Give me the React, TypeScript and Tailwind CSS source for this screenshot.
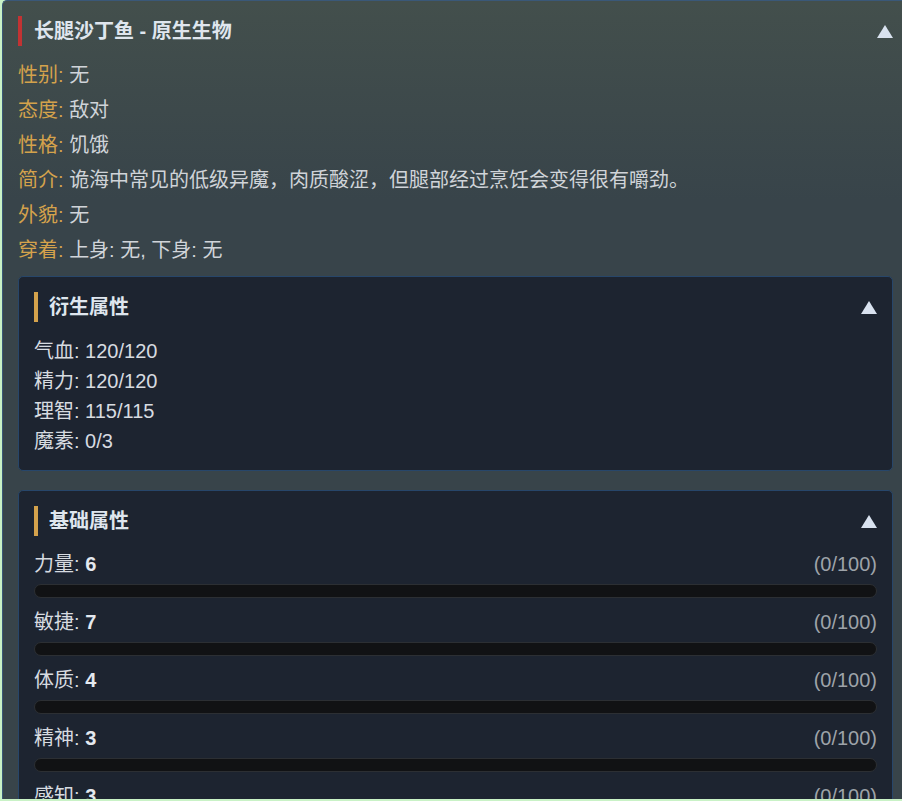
import React from 'react';

const font = { fontFamily: '"Liberation Sans", "Noto Sans CJK SC", sans-serif' };

const Caret: React.FC = () => (
    <svg width="16" height="13" viewBox="0 0 16 13" className="shrink-0">
        <polygon points="0,13 8,0 16,13" fill="#d9e2ef" />
    </svg>
);

const infoRows: [string, string][] = [
    ['性别', '无'],
    ['态度', '敌对'],
    ['性格', '饥饿'],
    ['简介', '诡海中常见的低级异魔，肉质酸涩，但腿部经过烹饪会变得很有嚼劲。'],
    ['外貌', '无'],
    ['穿着', '上身: 无, 下身: 无'],
];

const derived = ['气血: 120/120', '精力: 120/120', '理智: 115/115', '魔素: 0/3'];

const stats: [string, number][] = [
    ['力量', 6],
    ['敏捷', 7],
    ['体质', 4],
    ['精神', 3],
    ['感知', 3],
];

const SectionTitle: React.FC<{ title: string }> = ({ title }) => (
    <div className="flex items-center justify-between h-[30px]">
        <div className="h-full flex items-center border-l-4 border-[#d4a24c] pl-[11px] text-[20px] font-bold text-[#dfe6ee]">
            {title}
        </div>
        <Caret />
    </div>
);

const App: React.FC = () => {
    return (
        <div className="w-[902px] h-[801px] overflow-hidden bg-[#c9f2c6] pl-[2px] pb-[2px]" style={font}>
            <div className="w-[908px] h-full overflow-hidden rounded-tl-[5px] border-t border-l border-[#3a5878] bg-linear-to-b from-[#434f4c] to-[#38444a] to-[25%] pt-[15px] pl-[15px]">
                <div className="w-[875px]">
                    <div className="flex items-center justify-between h-[30px]">
                        <div className="h-full flex items-center border-l-4 border-[#c23333] pl-3 text-[20px] font-bold text-[#dfe6ee]">
                            长腿沙丁鱼 - 原生生物
                        </div>
                        <Caret />
                    </div>

                    <div className="mt-[12px] text-[20px]">
                        {infoRows.map(([k, v]) => (
                            <div key={k} className="leading-[35px] whitespace-nowrap">
                                <span className="text-[#d4a24c]">{k}:</span>{' '}
                                <span className="text-[#d0d4d9]">{v}</span>
                            </div>
                        ))}
                    </div>

                    <div className="mt-[8px] rounded-[5px] border border-[#27466a] bg-[#1d2430] pt-[15px] pb-[14px] px-[15px]">
                        <SectionTitle title="衍生属性" />
                        <div className="mt-[14px] text-[20px] text-[#d7dbe0]">
                            {derived.map((d) => (
                                <div key={d} className="leading-[30px]">{d}</div>
                            ))}
                        </div>
                    </div>

                    <div className="mt-[19px] rounded-[5px] border border-[#27466a] bg-[#1d2430] pt-[15px] px-[15px]">
                        <SectionTitle title="基础属性" />
                        <div className="mt-[14px]">
                            {stats.map(([name, val]) => (
                                <div key={name} className="mb-[10px]">
                                    <div className="flex items-center justify-between h-[28px] text-[20px]">
                                        <span className="text-[#d7dbe0]">
                                            {name}: <b className="text-[#e4e9ef]">{val}</b>
                                        </span>
                                        <span className="text-[#9ea3a9]">(0/100)</span>
                                    </div>
                                    <div className="mt-[6px] h-[14px] rounded-full bg-[#111214] border border-[#2c2f33]"></div>
                                </div>
                            ))}
                        </div>
                    </div>
                </div>
            </div>
        </div>
    );
};

export default App;
